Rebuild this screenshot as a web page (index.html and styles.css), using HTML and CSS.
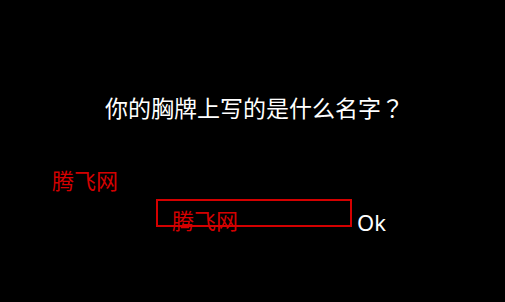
FILE: index.html
```html
<!DOCTYPE html>
<html lang="zh">
<head>
<meta charset="utf-8">
<link rel="stylesheet" href="styles.css">
</head>
<body>
<main class="screen">
  <h1 class="question">你的胸牌上写的是什么名字<span class="qmark" lang="ja">？</span></h1>
  <div class="label">腾飞网</div>
  <div class="row">
    <div class="field"><span class="field-text">腾飞网</span></div>
    <span class="ok">Ok</span>
  </div>
</main>
</body>
</html>
```
FILE: styles.css
```css
html, body {
  margin: 0;
  padding: 0;
  background: #000;
}
.screen {
  width: 505px;
  height: 302px;
  box-sizing: border-box;
  padding-top: 92px;
  font-family: "Noto Sans", "Noto Sans CJK SC", sans-serif;
  color: #fff;
}
.question {
  margin: 0 0 0 105px;
  font-family: "Noto Sans CJK SC", sans-serif;
  font-weight: normal;
  font-size: 23px;
  line-height: 30px;
  color: #fff;
}
.qmark {
  font-family: "Noto Sans CJK JP", "Noto Sans CJK TC", sans-serif;
}
.label {
  margin: 42px 0 0 52px;
  font-family: "Noto Sans CJK SC", sans-serif;
  font-size: 22px;
  line-height: 30px;
  color: #d40000;
}
.row {
  display: flex;
  align-items: flex-start;
  margin: 5px 0 0 156px;
  gap: 5px;
}
.field {
  width: 196px;
  height: 28px;
  box-sizing: border-box;
  border: 2px solid #d40000;
  padding: 3px 0 0 14px;
}
.field-text {
  display: block;
  font-family: "Noto Sans CJK SC", sans-serif;
  font-size: 22px;
  line-height: 30px;
  color: #d40000;
  white-space: nowrap;
}
.ok {
  margin-top: 8px;
  font-size: 22px;
  line-height: 30px;
  color: #fff;
}
```
